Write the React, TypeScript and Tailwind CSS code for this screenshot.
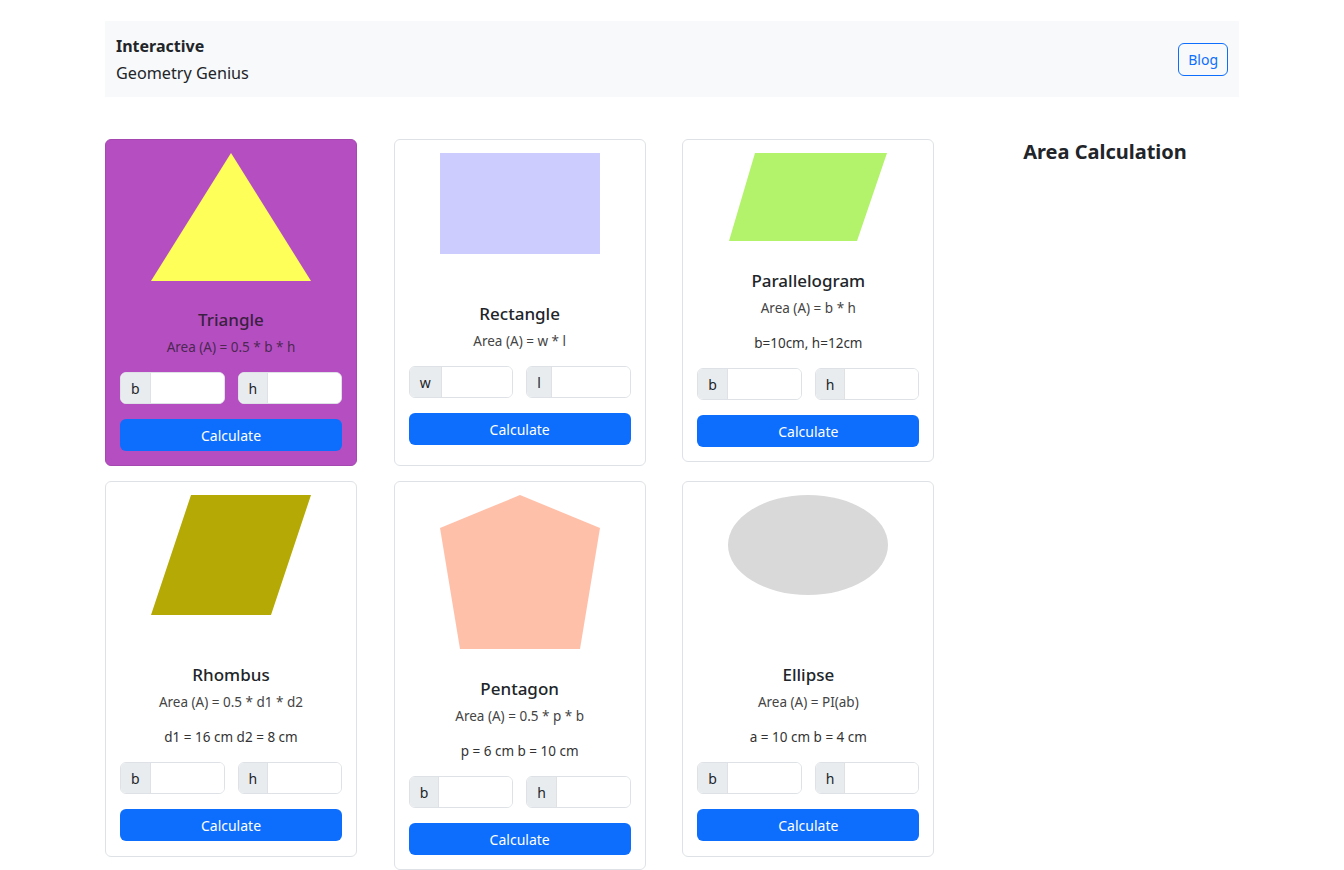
import React from "react";

type Shape = {
  name: string;
  formula: string;
  example?: string;
  boxH: string;
  pb?: string;
  fields: [string, string];
  active?: boolean;
  art: React.ReactNode;
};

const shapes: Shape[] = [
  {
    name: "Triangle",
    formula: "Area (A) = 0.5 * b * h",
    boxH: "h-[156px]",
    fields: ["b", "h"],
    active: true,
    art: (
      <svg width="160" height="128" viewBox="0 0 160 128">
        <polygon points="80,0 160,128 0,128" fill="#ffff5a" />
      </svg>
    ),
  },
  {
    name: "Rectangle",
    formula: "Area (A) = w * l",
    boxH: "h-[150px]",
    pb: "pb-[20px]",
    fields: ["w", "l"],
    art: (
      <svg width="160" height="101" viewBox="0 0 160 101">
        <rect x="0" y="0" width="160" height="101" fill="#ccccff" />
      </svg>
    ),
  },
  {
    name: "Parallelogram",
    formula: "Area (A) = b * h",
    example: "b=10cm, h=12cm",
    boxH: "h-[117px]",
    fields: ["b", "h"],
    art: (
      <svg width="160" height="88" viewBox="0 0 160 88">
        <polygon points="27,0 159,0 129,88 1,88" fill="#b3f26b" />
      </svg>
    ),
  },
  {
    name: "Rhombus",
    formula: "Area (A) = 0.5 * d1 * d2",
    example: "d1 = 16 cm d2 = 8 cm",
    boxH: "h-[169px]",
    pb: "pb-[15px]",
    fields: ["b", "h"],
    art: (
      <svg width="160" height="120" viewBox="0 0 160 120">
        <polygon points="40,0 160,0 120,120 0,120" fill="#b5aa05" />
      </svg>
    ),
  },
  {
    name: "Pentagon",
    formula: "Area (A) = 0.5 * p * b",
    example: "p = 6 cm b = 10 cm",
    boxH: "h-[183px]",
    fields: ["b", "h"],
    art: (
      <svg width="160" height="154" viewBox="0 0 160 154">
        <polygon points="80,0 160,33 140,154 20,154 0,33" fill="#ffc0aa" />
      </svg>
    ),
  },
  {
    name: "Ellipse",
    formula: "Area (A) = PI(ab)",
    example: "a = 10 cm b = 4 cm",
    boxH: "h-[169px]",
    pb: "pb-[15px]",
    fields: ["b", "h"],
    art: (
      <svg width="160" height="100" viewBox="0 0 160 100">
        <ellipse cx="80" cy="50" rx="80" ry="50" fill="#d9d9d9" />
      </svg>
    ),
  },
];

function Field({ label }: { label: string }) {
  return (
    <div className="flex h-[32px] rounded-[6px] border border-[#dee2e6] bg-white overflow-hidden">
      <span className="flex items-center px-[10px] bg-[#e9ecef] border-r border-[#dee2e6] text-[14px] text-[#212529]">
        {label}
      </span>
      <input className="min-w-0 flex-1 bg-white outline-none px-2 text-[14px]" />
    </div>
  );
}

function Card({ s }: { s: Shape }) {
  return (
    <div
      className={
        "w-[252px] rounded-[6px] border px-[14px] pt-[13px] " +
        (s.pb ?? "pb-[14px]") +
        " " +
        (s.active ? "bg-[#b54fc1] border-[#a548b0]" : "bg-white border-[#dee2e6]")
      }
    >
      <div className={"flex justify-center items-start " + s.boxH}>{s.art}</div>
      <h5
        className={
          "text-center text-[17px] leading-[22px] font-medium mb-[6px] " +
          (s.active ? "text-[#3a1f40]" : "text-[#212529]")
        }
      >
        {s.name}
      </h5>
      <p
        className={
          "text-center text-[13.5px] leading-[21px] mb-[14px] " +
          (s.active ? "text-[#4c2753]" : "text-[#444]")
        }
      >
        {s.formula}
      </p>
      {s.example && (
        <p className="text-center text-[13.5px] leading-[21px] mb-[14px] text-[#333]">{s.example}</p>
      )}
      <div className="grid grid-cols-2 gap-[13px]">
        <Field label={s.fields[0]} />
        <Field label={s.fields[1]} />
      </div>
      <button className="mt-[15px] w-full h-[32px] rounded-[6px] bg-[#0d6efd] text-white text-[14px]">
        Calculate
      </button>
    </div>
  );
}

export default function App() {
  return (
    <div className="min-h-screen bg-white text-[#212529] font-['Noto_Sans','Open_Sans',sans-serif] pt-[21px]">
      <div className="w-[1134px] ml-[105px]">
        {/* Navbar */}
        <nav className="h-[76px] bg-[#f8f9fa] flex items-center justify-between px-[11px]">
          <div className="leading-[27px] pt-[1px]">
            <div className="font-bold text-[16px]">Interactive</div>
            <div className="text-[16.2px]">Geometry Genius</div>
          </div>
          <button className="h-[33px] px-[9px] rounded-[6px] border border-[#0d6efd] text-[#0d6efd] text-[14px]">
            Blog
          </button>
        </nav>

        {/* Content */}
        <div className="flex mt-[42px]">
          <div className="grid grid-cols-3 w-[866px] gap-y-[15px] items-start">
            {shapes.map((s) => (
              <Card key={s.name} s={s} />
            ))}
          </div>
          <div className="flex-1 text-center">
            <h4 className="text-[20px] leading-[26px] font-bold">Area Calculation</h4>
          </div>
        </div>
      </div>
    </div>
  );
}
